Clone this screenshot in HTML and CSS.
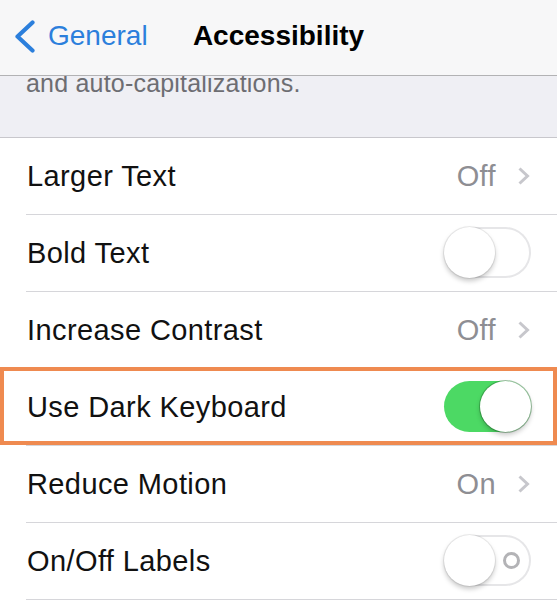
FILE: index.html
```html
<!DOCTYPE html>
<html lang="en">
<head>
<meta charset="utf-8">
<title>Accessibility</title>
<link rel="stylesheet" href="styles.css">
</head>
<body>
<header class="nav">
  <a class="back" href="#">
    <svg class="back-chevron" width="21" height="33" viewBox="0 0 21 33" aria-hidden="true">
      <polyline points="18.5,2.5 3.5,16.5 18.5,30.5" fill="none" stroke="#2c7fdc" stroke-width="4.2" stroke-linecap="round" stroke-linejoin="round"/>
    </svg>
    <span class="back-label">General</span>
  </a>
  <h1 class="title">Accessibility</h1>
  <span class="nav-spacer"></span>
</header>

<section class="footer-note">
  <p class="note-text">and auto-capitalizations.</p>
</section>

<ul class="list">
  <li class="row">
    <div class="row-inner">
      <span class="label">Larger Text</span>
      <span class="detail">
        <span class="value">Off</span>
        <svg class="chevron" width="13" height="20" viewBox="0 0 13 20" aria-hidden="true">
          <polyline points="2.5,2.5 10.5,10 2.5,17.5" fill="none" stroke="#c7c7cc" stroke-width="3"/>
        </svg>
      </span>
    </div>
  </li>
  <li class="row">
    <div class="row-inner">
      <span class="label">Bold Text</span>
      <span class="toggle"><span class="knob"></span></span>
    </div>
  </li>
  <li class="row">
    <div class="row-inner">
      <span class="label">Increase Contrast</span>
      <span class="detail">
        <span class="value">Off</span>
        <svg class="chevron" width="13" height="20" viewBox="0 0 13 20" aria-hidden="true">
          <polyline points="2.5,2.5 10.5,10 2.5,17.5" fill="none" stroke="#c7c7cc" stroke-width="3"/>
        </svg>
      </span>
    </div>
  </li>
  <li class="row row-highlight">
    <div class="row-inner">
      <span class="label">Use Dark Keyboard</span>
      <span class="toggle toggle-on"><span class="knob"></span></span>
    </div>
  </li>
  <li class="row">
    <div class="row-inner">
      <span class="label">Reduce Motion</span>
      <span class="detail">
        <span class="value">On</span>
        <svg class="chevron" width="13" height="20" viewBox="0 0 13 20" aria-hidden="true">
          <polyline points="2.5,2.5 10.5,10 2.5,17.5" fill="none" stroke="#c7c7cc" stroke-width="3"/>
        </svg>
      </span>
    </div>
  </li>
  <li class="row">
    <div class="row-inner">
      <span class="label">On/Off Labels</span>
      <span class="toggle toggle-labels"><span class="knob"></span><span class="off-mark"></span></span>
    </div>
  </li>
</ul>
</body>
</html>
```

FILE: styles.css
```css
* {
  box-sizing: border-box;
}

html, body {
  margin: 0;
  padding: 0;
  background: #ffffff;
}

body {
  font-family: "Liberation Sans", Arial, sans-serif;
  color: #111111;
  width: 557px;
  height: 600px;
  overflow: hidden;
}

/* Navigation bar */
.nav {
  height: 76px;
  background: #f7f7f8;
  border-bottom: 1px solid #b2b2b4;
  display: grid;
  grid-template-columns: 1fr auto 1fr;
  align-items: center;
  padding: 0 14px 3px 14px;
}

.back {
  display: flex;
  align-items: center;
  gap: 13px;
  text-decoration: none;
  color: #2c7fdc;
}

.back-chevron {
  display: block;
  flex: none;
}

.back-label {
  font-size: 28px;
  line-height: 34px;
}

.title {
  margin: 0;
  font-size: 28px;
  line-height: 34px;
  font-weight: bold;
  color: #000000;
}

/* Group footer text partially hidden under the nav */
.footer-note {
  height: 62px;
  background: #efeff4;
  border-bottom: 1px solid #c8c7cc;
  overflow: hidden;
  padding-left: 26px;
}

.note-text {
  margin: -8px 0 0 0;
  font-size: 25px;
  line-height: 30px;
  letter-spacing: 0.2px;
  color: #6d6d72;
}

/* Settings list */
.list {
  list-style: none;
  margin: 0;
  padding: 0;
  background: #ffffff;
}

.row {
  padding-left: 26px;
  position: relative;
}

.row-inner {
  height: 77px;
  border-bottom: 1px solid #d6d6da;
  display: flex;
  align-items: center;
  justify-content: space-between;
  padding-right: 26px;
}

.label {
  font-size: 29px;
  line-height: 34px;
  letter-spacing: 0.4px;
  color: #111111;
  padding-left: 1px;
}

.detail {
  display: flex;
  align-items: center;
  gap: 21px;
  padding-right: 1px;
}

.value {
  font-size: 29px;
  line-height: 34px;
  letter-spacing: 0.4px;
  color: #8e8e93;
}

.chevron {
  display: block;
}

/* Highlight frame over the row */
.row-highlight::after {
  content: "";
  position: absolute;
  left: 0;
  right: 0;
  top: -2px;
  bottom: 1px;
  border: 4px solid #ef8a50;
  pointer-events: none;
}

/* Switches */
.toggle {
  width: 87px;
  height: 51px;
  border-radius: 26px;
  background: #ffffff;
  box-shadow: inset 0 0 0 2px #e6e6e8;
  display: flex;
  align-items: center;
  margin-top: -1px;
}

.knob {
  width: 51px;
  height: 51px;
  border-radius: 50%;
  background: #ffffff;
  box-shadow: 0 3px 5px rgba(0, 0, 0, 0.22), 0 0 0 1px rgba(0, 0, 0, 0.07);
  flex: none;
}

.toggle-on {
  background: #4cd964;
  box-shadow: none;
  justify-content: flex-end;
}

.toggle-on .knob {
  box-shadow: 0 3px 5px rgba(0, 0, 0, 0.22), 0 0 0 1px rgba(40, 120, 50, 0.45);
}

.off-mark {
  width: 17px;
  height: 17px;
  border-radius: 50%;
  border: 3px solid #b3b3b6;
  margin-left: 8px;
  flex: none;
}
```
